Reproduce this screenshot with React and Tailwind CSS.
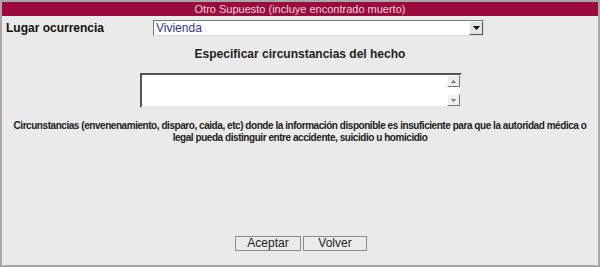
const App = () => {
  return (
    <div className="w-[600px] h-[267px] bg-[#eaeaea] border-2 border-[#a8a8a8] flex flex-col font-['Liberation_Sans',Arial,sans-serif]">
      {/* Header */}
      <div className="h-[14px] bg-[#9b0a3c] text-[#f3d3dd] text-[11px] leading-[14px] text-center">
        Otro Supuesto (incluye encontrado muerto)
      </div>

      {/* Lugar */}
      <div className="flex items-center mt-[4px] h-[16px]">
        <span className="w-[151px] pl-[4px] text-[12px] font-bold text-[#111]">Lugar ocurrencia</span>
        <div className="w-[331px] h-[16px] bg-white border border-t-[#777] border-l-[#777] border-b-[#ddd] border-r-[#ddd] flex items-center">
          <span className="flex-1 pl-[2px] text-[12px] leading-[14px] text-[#333399]">Vivienda</span>
          <div className="w-[14px] h-[14px] bg-[#e4e4e4] border border-t-white border-l-white border-b-[#555] border-r-[#555] flex items-center justify-center">
            <svg width="7" height="4" viewBox="0 0 7 4"><path d="M0 0h7L3.5 4z" fill="#000" /></svg>
          </div>
        </div>
      </div>

      {/* Especificar */}
      <div className="mt-[11px] text-center text-[12px] font-bold text-[#222] leading-[14px]">
        Especificar circunstancias del hecho
      </div>
      <div className="flex justify-center mt-[12px] pl-[2px]">
        <div className="w-[322px] h-[35px] bg-white border-2 border-t-[#555] border-l-[#555] border-b-[#e8e8e8] border-r-[#e8e8e8] flex justify-end">
          <div className="w-[13px] flex flex-col justify-between bg-white">
            <div className="h-[12px] bg-[#eee] border border-t-white border-l-white border-b-[#777] border-r-[#777] flex items-center justify-center">
              <svg width="5" height="3" viewBox="0 0 5 3"><path d="M0 3h5L2.5 0z" fill="#777" /></svg>
            </div>
            <div className="h-[12px] bg-[#eee] border border-t-white border-l-white border-b-[#777] border-r-[#777] flex items-center justify-center">
              <svg width="5" height="3" viewBox="0 0 5 3"><path d="M0 0h5L2.5 3z" fill="#777" /></svg>
            </div>
          </div>
        </div>
      </div>

      {/* Description */}
      <p className="mt-[12px] px-[6px] text-center text-[10px] font-bold leading-[12px] text-[#222] tracking-[-0.45px]">
        Circunstancias (envenenamiento, disparo, caida, etc) donde la información disponible es insuficiente para que la autoridad médica o legal pueda distinguir entre accidente, suicidio u homicidio
      </p>

      {/* Buttons */}
      <div className="mt-auto mb-[14px] flex justify-center gap-[2px] pl-[2px]">
        <button className="w-[66px] h-[15px] bg-[#ebebeb] border border-[#8a8a8a] text-[12px] leading-[13px] text-[#222]">Aceptar</button>
        <button className="w-[64px] h-[15px] bg-[#ebebeb] border border-[#8a8a8a] text-[12px] leading-[13px] text-[#222]">Volver</button>
      </div>
    </div>
  );
};

export default App;
